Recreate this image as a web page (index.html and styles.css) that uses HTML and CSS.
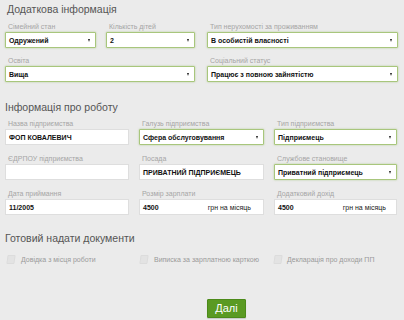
FILE: index.html
```html
<!DOCTYPE html>
<html lang="uk">
<head>
<meta charset="utf-8">
<link rel="stylesheet" href="styles.css">
</head>
<body>
<div class="page">
  <h2 class="title t1">Додаткова інформація</h2>
  <div class="top">
    <div class="half">
      <div class="pair">
        <div class="field w91">
          <div class="label">Сімейний стан</div>
          <div class="ctrl select">Одружений<span class="arrow"></span></div>
        </div>
        <div class="field w89">
          <div class="label">Кількість дітей</div>
          <div class="ctrl select">2<span class="arrow"></span></div>
        </div>
      </div>
      <div class="field">
        <div class="label">Освіта</div>
        <div class="ctrl select">Вища<span class="arrow"></span></div>
      </div>
    </div>
    <div class="half right">
      <div class="field">
        <div class="label">Тип нерухомості за проживанням</div>
        <div class="ctrl select">В особистій власності<span class="arrow"></span></div>
      </div>
      <div class="field">
        <div class="label">Соціальний статус</div>
        <div class="ctrl select">Працює з повною зайнятістю<span class="arrow"></span></div>
      </div>
    </div>
  </div>

  <h2 class="title t2">Інформація про роботу</h2>
  <div class="grid">
    <div class="field">
      <div class="label">Назва підприємства</div>
      <div class="ctrl input">ФОП КОВАЛЕВИЧ</div>
    </div>
    <div class="field">
      <div class="label">Галузь підприємства</div>
      <div class="ctrl select">Сфера обслуговування<span class="arrow"></span></div>
    </div>
    <div class="field">
      <div class="label">Тип підприємства</div>
      <div class="ctrl select">Підприємець<span class="arrow"></span></div>
    </div>
    <div class="field">
      <div class="label">ЄДРПОУ підприємства</div>
      <div class="ctrl input"></div>
    </div>
    <div class="field">
      <div class="label">Посада</div>
      <div class="ctrl input">ПРИВАТНИЙ ПІДПРИЄМЕЦЬ</div>
    </div>
    <div class="field">
      <div class="label">Службове становище</div>
      <div class="ctrl select">Приватний підприємець<span class="arrow"></span></div>
    </div>
    <div class="field">
      <div class="label">Дата приймання</div>
      <div class="ctrl input">11/2005</div>
    </div>
    <div class="field">
      <div class="label">Розмір зарплати</div>
      <div class="ctrl input suffixed"><span>4500</span><span class="suffix">грн на місяць</span></div>
    </div>
    <div class="field">
      <div class="label">Додатковий дохід</div>
      <div class="ctrl input suffixed"><span>4500</span><span class="suffix s2">грн на місяць</span></div>
    </div>
  </div>

  <h2 class="title t3">Готовий надати документи</h2>
  <div class="grid checks">
    <div class="check"><span class="box"></span>Довідка з місця роботи</div>
    <div class="check"><span class="box"></span>Виписка за зарплатною карткою</div>
    <div class="check"><span class="box"></span>Декларація про доходи ПП</div>
  </div>

  <div class="actions"><button class="btn">Далі</button></div>
</div>
</body>
</html>
```
FILE: styles.css
```css
html, body {
  margin: 0;
  padding: 0;
}
body {
  background: #ebebeb;
  font-family: "Liberation Sans", Arial, sans-serif;
  width: 404px;
  height: 320px;
  overflow: hidden;
}
.page {
  padding: 0 6px 0 5px;
}
.title {
  margin: 0;
  font-weight: normal;
  font-size: 10.5px;
  line-height: 12px;
  color: #555;
}
.t1 { margin-top: 3px; padding-left: 2px; }
.t2 { margin-top: 19px; }
.t3 { margin-top: 17px; }

.top {
  display: flex;
  gap: 12px;
  margin-top: 7px;
}
.half {
  width: 190px;
  display: flex;
  flex-direction: column;
  gap: 8px;
}
.half.right { width: 191px; }
.pair {
  display: flex;
  gap: 10px;
}
.w91 { width: 91px; }
.w89 { width: 89px; }

.field {
  display: flex;
  flex-direction: column;
}
.label {
  font-size: 7px;
  line-height: 9px;
  color: #a5a5a5;
  margin-bottom: 1px;
  padding-left: 3px;
  white-space: nowrap;
}
.ctrl {
  box-sizing: border-box;
  height: 16px;
  background: #fff;
  font-size: 7px;
  font-weight: bold;
  color: #111;
  display: flex;
  align-items: center;
  padding: 0 3px;
  position: relative;
  white-space: nowrap;
  overflow: hidden;
}
.select {
  border: 1px solid #a8c67c;
  box-shadow: 0 0 2px rgba(130, 175, 70, 0.55);
  border-radius: 1px;
}
.input {
  border: 1px solid #dedede;
}
.arrow {
  position: absolute;
  right: 5px;
  top: 6px;
  width: 0;
  height: 0;
  border-left: 1.5px solid transparent;
  border-right: 1.5px solid transparent;
  border-top: 3px solid #222;
}
.suffixed {
  justify-content: space-between;
}
.suffix {
  font-weight: normal;
  color: #222;
  padding-right: 9px;
}
.suffix.s2 { padding-right: 7px; }

.grid {
  display: grid;
  grid-template-columns: 124px 125px 123px;
  column-gap: 10px;
  row-gap: 9px;
  margin-top: 6px;
}
.checks {
  margin-top: 11px;
}
.check {
  display: flex;
  align-items: center;
  gap: 5px;
  font-size: 7px;
  line-height: 9px;
  color: #9a9a9a;
  white-space: nowrap;
}
.check:first-child { padding-left: 2px; gap: 6px; }
.check:nth-child(2) { padding-left: 1px; gap: 6px; }
.box {
  display: inline-block;
  width: 6px;
  height: 7px;
  background: #e3e3e3;
  border: 1px solid #dcdcdc;
  border-radius: 1px;
  transform: skewX(-8deg);
}
.actions {
  margin-top: 34px;
  padding-left: 202px;
}
.btn {
  box-sizing: border-box;
  width: 39px;
  height: 19px;
  padding: 0;
  background: #5a9a22;
  border: 1px solid #4c8a1a;
  border-radius: 1px;
  color: #fff;
  font-family: "Liberation Sans", Arial, sans-serif;
  font-size: 11px;
  line-height: 17px;
  box-shadow: 0 1px 1px rgba(0, 0, 0, 0.15);
}
```
